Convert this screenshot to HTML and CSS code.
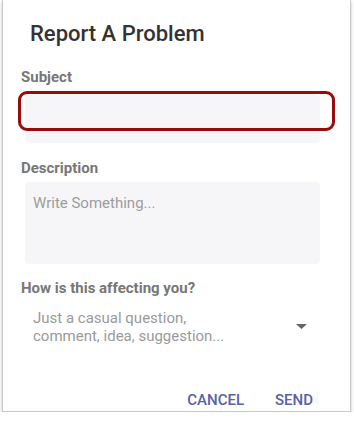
FILE: index.html
```html
<!DOCTYPE html>
<html lang="en">
<head>
    <meta charset="UTF-8">
    <meta name="viewport" content="width=device-width, initial-scale=1.0">
    <title>Report A Problem</title>
    <link rel="stylesheet" href="styles.css">
</head>
<body>
    <div class="dialog">
        <h2 class="title">Report A Problem</h2>

        <label class="field-label" for="subject">Subject</label>
        <div class="field-wrap">
            <input type="text" id="subject" class="field">
            <div class="highlight"></div>
        </div>

        <label class="field-label desc-label" for="description">Description</label>
        <textarea id="description" class="field area" placeholder="Write Something..."></textarea>

        <div class="field-label impact-label">How is this affecting you?</div>
        <div class="select">
            <span class="select-text">Just a casual question,<br>comment, idea, suggestion...</span>
            <svg class="caret" width="11" height="5" viewBox="0 0 11 5"><path d="M0 0h11L5.5 5z" fill="#666"/></svg>
        </div>

        <div class="actions">
            <button class="btn">CANCEL</button>
            <button class="btn">SEND</button>
        </div>
    </div>
</body>
</html>
```

FILE: styles.css
```css
body {
    margin: 0;
    background: #fff;
    font-family: Roboto, "Liberation Sans", sans-serif;
}
.dialog {
    margin-left: 2px;
    width: 349px;
    height: 412px;
    box-sizing: border-box;
    border: 1px solid #c8c8c8;
    border-top: none;
    box-shadow: 0 2px 3px rgba(0, 0, 0, 0.25);
    display: flex;
    flex-direction: column;
    padding: 21px 0 0 18px;
}
.title {
    margin: 0 0 0 9px;
    font-size: 22px;
    line-height: 26px;
    font-weight: 500;
    color: #333;
}
.field-label {
    display: block;
    margin-top: 21px;
    font-size: 15px;
    line-height: 18px;
    font-weight: 700;
    color: #777;
}
.field-wrap {
    position: relative;
    margin-top: 9px;
}
.field {
    display: block;
    margin-left: 4px;
    width: 295px;
    height: 48px;
    box-sizing: border-box;
    border: none;
    border-radius: 4px;
    background: #f6f6f8;
    font-family: inherit;
    outline: none;
}
.highlight {
    position: absolute;
    left: -3px;
    top: -4px;
    width: 317px;
    height: 40px;
    box-sizing: border-box;
    border: 3px solid #9b0a0a;
    border-radius: 9px;
}
.desc-label {
    margin-top: 16px;
}
.area {
    margin-top: 5px;
    height: 82px;
    padding: 12px 8px;
    resize: none;
    font-size: 15px;
    line-height: 18px;
}
.area::placeholder {
    color: #9c9c9c;
}
.impact-label {
    margin-top: 15px;
}
.select {
    display: flex;
    align-items: center;
    margin: 12px 0 0 12px;
    width: 274px;
}
.select-text {
    flex: 1;
    font-size: 15px;
    line-height: 18px;
    color: #9a9a9a;
}
.caret {
    margin-top: -1px;
}
.actions {
    display: flex;
    justify-content: flex-end;
    gap: 15px;
    margin-top: auto;
    margin-right: 29px;
}
.btn {
    background: none;
    border: none;
    padding: 0 8px;
    height: 22px;
    font-family: inherit;
    font-size: 15px;
    font-weight: 500;
    color: #5860a8;
    cursor: pointer;
}
```
